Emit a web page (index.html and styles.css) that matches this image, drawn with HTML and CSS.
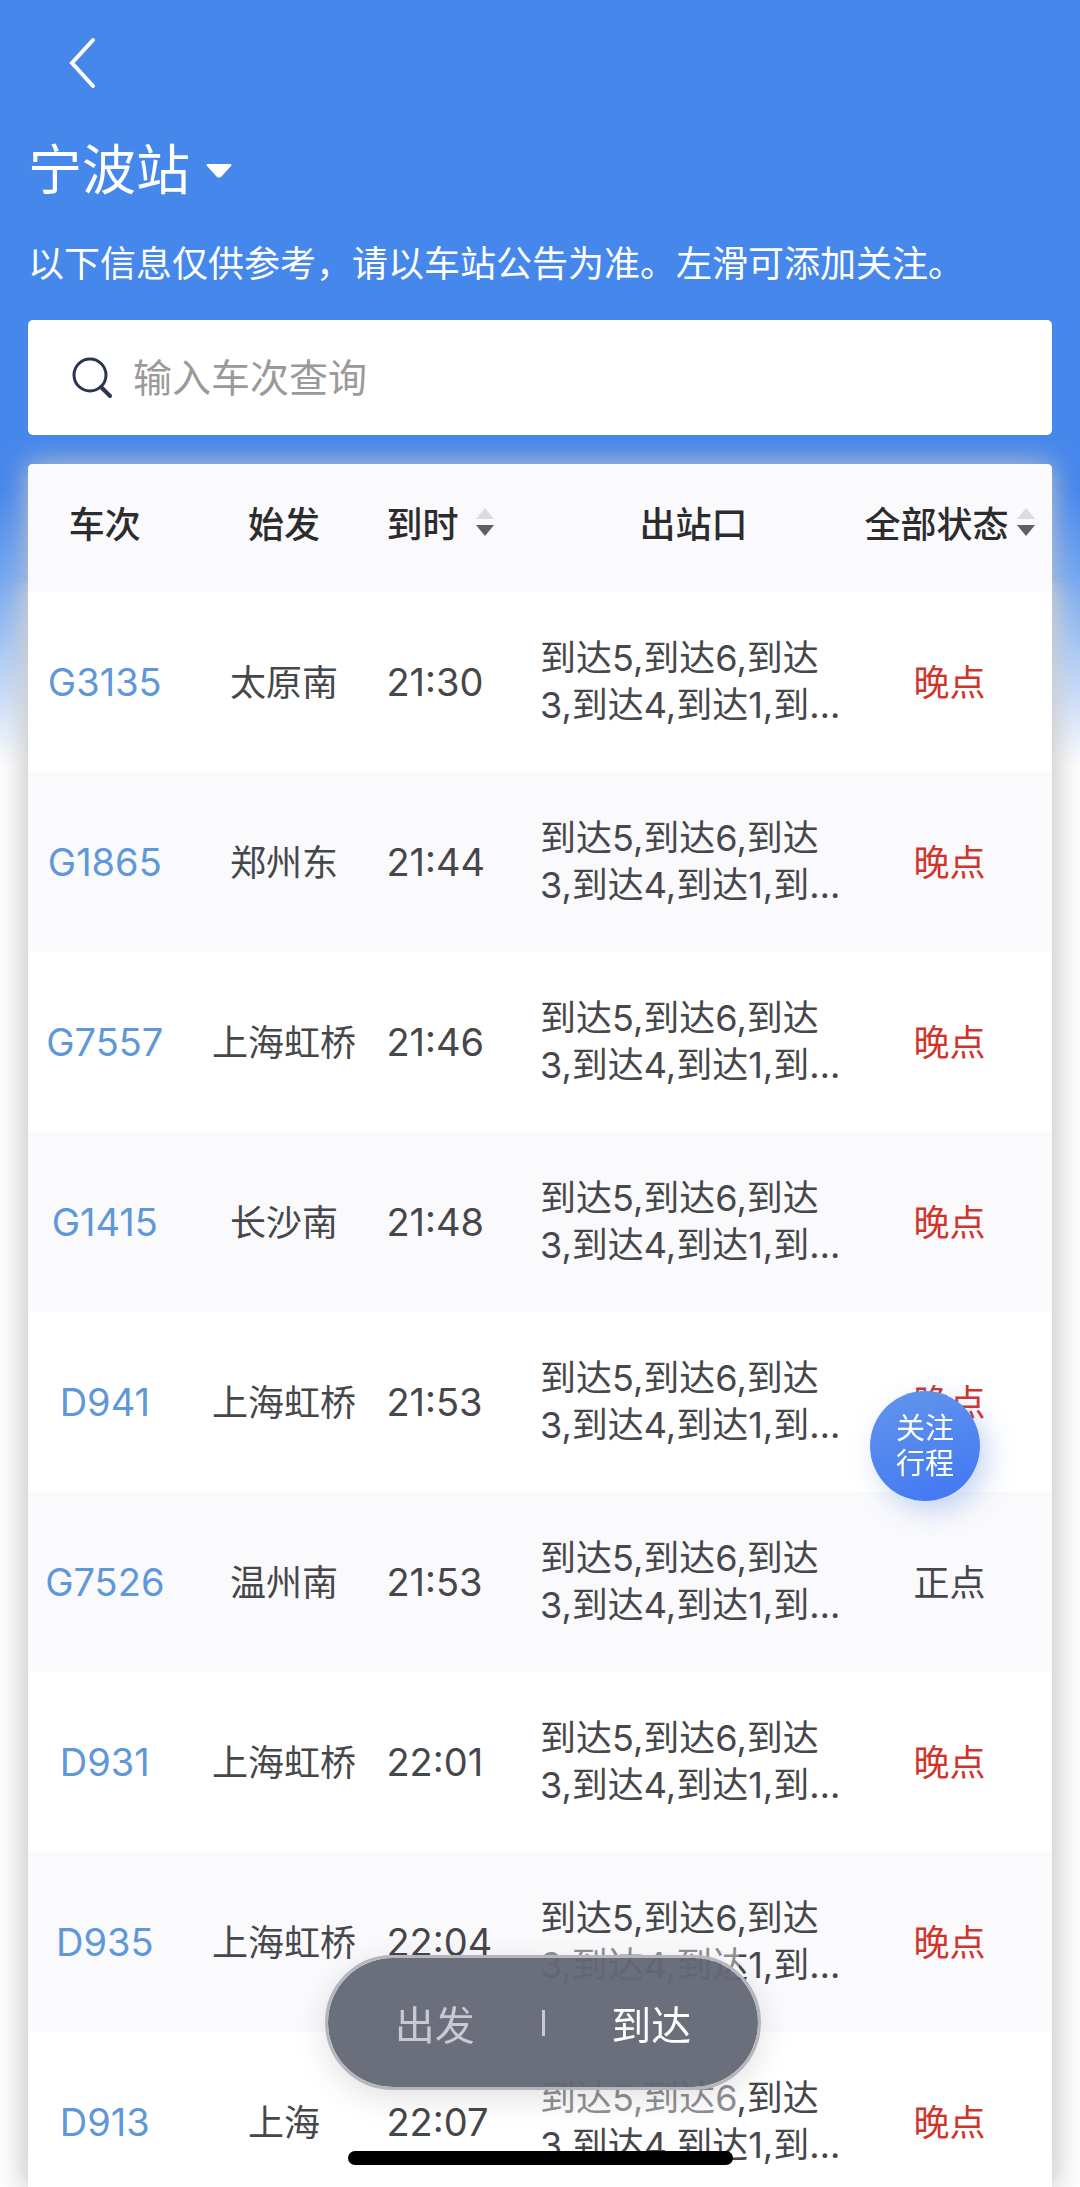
FILE: index.html
```html
<!DOCTYPE html>
<html lang="zh-CN">

<head>
  <meta charset="UTF-8">
  <meta name="viewport" content="width=device-width, initial-scale=1.0">
  <title>宁波站</title>
  <link rel="stylesheet" href="styles.css">
</head>

<body>
  <header class="top">
    <a class="back" href="#" aria-label="返回">
      <svg width="32" height="56" viewBox="0 0 32 56" fill="none" stroke="#fff" stroke-width="4" stroke-linecap="round" stroke-linejoin="miter">
        <path d="M28 6 L7 29 L28 52" />
      </svg>
    </a>
    <div class="station">
      <select class="station-select" aria-label="车站">
        <option>宁波站</option>
      </select>
      <svg width="26" height="14" viewBox="0 0 26 14" fill="#fff"><path d="M1 0 H25 Q26 1 25 2 L15 13 Q13 14 11 13 L1 2 Q0 1 1 0 Z" /></svg>
    </div>
    <p class="notice">以下信息仅供参考，请以车站公告为准。左滑可添加关注。</p>
    <label class="search">
      <svg width="42" height="42" viewBox="0 0 42 42" fill="none" stroke="#2c3550" stroke-width="3" stroke-linecap="round">
        <circle cx="19" cy="18" r="16" />
        <path d="M30 30 L39 39" stroke-width="4" />
      </svg>
      <input class="search-input" type="text" placeholder="输入车次查询" aria-label="输入车次查询">
    </label>
  </header>

  <main class="board">
    <table class="trains">
      <colgroup>
        <col class="col-no">
        <col class="col-from">
        <col class="col-time">
        <col class="col-exit">
        <col class="col-status">
      </colgroup>
      <thead>
        <tr>
          <th>车次</th>
          <th>始发</th>
          <th class="time">
            <button class="sort sort-time">到时
              <svg width="18" height="28" viewBox="0 0 18 28"><path d="M9 0 L18 11 H0 Z" fill="#dcdcde" /><path d="M9 28 L0 17 H18 Z" fill="#606064" /></svg>
            </button>
          </th>
          <th>出站口</th>
          <th>
            <button class="sort">全部状态
              <svg width="18" height="28" viewBox="0 0 18 28"><path d="M9 0 L18 11 H0 Z" fill="#dcdcde" /><path d="M9 28 L0 17 H18 Z" fill="#606064" /></svg>
            </button>
          </th>
        </tr>
      </thead>
      <tbody>
        <tr>
          <td class="no"><a href="#">G3135</a></td>
          <td>太原南</td>
          <td class="time">21:30</td>
          <td class="exit"><div class="clamp">到达5,到达6,到达3,到达4,到达1,到达2</div></td>
          <td class="late">晚点</td>
        </tr>
        <tr>
          <td class="no"><a href="#">G1865</a></td>
          <td>郑州东</td>
          <td class="time">21:44</td>
          <td class="exit"><div class="clamp">到达5,到达6,到达3,到达4,到达1,到达2</div></td>
          <td class="late">晚点</td>
        </tr>
        <tr>
          <td class="no"><a href="#">G7557</a></td>
          <td>上海虹桥</td>
          <td class="time">21:46</td>
          <td class="exit"><div class="clamp">到达5,到达6,到达3,到达4,到达1,到达2</div></td>
          <td class="late">晚点</td>
        </tr>
        <tr>
          <td class="no"><a href="#">G1415</a></td>
          <td>长沙南</td>
          <td class="time">21:48</td>
          <td class="exit"><div class="clamp">到达5,到达6,到达3,到达4,到达1,到达2</div></td>
          <td class="late">晚点</td>
        </tr>
        <tr>
          <td class="no"><a href="#">D941</a></td>
          <td>上海虹桥</td>
          <td class="time">21:53</td>
          <td class="exit"><div class="clamp">到达5,到达6,到达3,到达4,到达1,到达2</div></td>
          <td class="late">晚点</td>
        </tr>
        <tr>
          <td class="no"><a href="#">G7526</a></td>
          <td>温州南</td>
          <td class="time">21:53</td>
          <td class="exit"><div class="clamp">到达5,到达6,到达3,到达4,到达1,到达2</div></td>
          <td>正点</td>
        </tr>
        <tr>
          <td class="no"><a href="#">D931</a></td>
          <td>上海虹桥</td>
          <td class="time">22:01</td>
          <td class="exit"><div class="clamp">到达5,到达6,到达3,到达4,到达1,到达2</div></td>
          <td class="late">晚点</td>
        </tr>
        <tr>
          <td class="no"><a href="#">D935</a></td>
          <td>上海虹桥</td>
          <td class="time">22:04</td>
          <td class="exit"><div class="clamp">到达5,到达6,到达3,到达4,到达1,到达2</div></td>
          <td class="late">晚点</td>
        </tr>
        <tr>
          <td class="no"><a href="#">D913</a></td>
          <td>上海</td>
          <td class="time">22:07</td>
          <td class="exit"><div class="clamp">到达5,到达6,到达3,到达4,到达1,到达2</div></td>
          <td class="late">晚点</td>
        </tr>
      </tbody>
    </table>
  </main>

  <button class="follow">关注<br>行程</button>

  <div class="dock">
    <div class="switch">
      <button class="switch-item">出发</button>
      <span class="switch-line"></span>
      <button class="switch-item active">到达</button>
    </div>
  </div>

  <div class="home-bar"></div>
</body>

</html>
```

FILE: styles.css
```css
* {
  box-sizing: border-box;
}

body {
  display: flex;
  flex-direction: column;
  height: 100vh;
  margin: 0;
  padding: 0 28px;
  overflow: hidden;
  background: linear-gradient(#4687ec 0, #4687ec 490px, #78a9f1 583px, #fdfdfd 765px);
  color: #46474b;
  font-family: Inter, "Noto Sans CJK SC", sans-serif;
  font-size: 36px;
}

button,
select,
input {
  padding: 0;
  border: none;
  background: none;
  color: inherit;
  font: inherit;
}

svg {
  display: block;
  flex: none;
}

.top {
  flex: none;
  padding-top: 32px;
  color: #fff;
}

.back {
  display: flex;
  align-items: center;
  width: 80px;
  height: 60px;
  padding-left: 37px;
}

.station {
  display: flex;
  align-items: center;
  gap: 16px;
  height: 64px;
  margin-top: 47px;
}

.station-select {
  appearance: none;
  height: 64px;
  font-size: 54px;
  line-height: 64px;
}

.notice {
  margin: 37px 0 32px;
  line-height: 48px;
}

.search {
  display: flex;
  align-items: center;
  gap: 20px;
  height: 115px;
  padding: 0 43px;
  border-radius: 5px;
  background: #fff;
}

.search-input {
  flex: 1;
  min-width: 0;
  height: 60px;
  outline: none;
  color: #46474b;
  font-size: 39px;
}

.search-input::placeholder {
  color: #9a9a9a;
  opacity: 1;
}

.board {
  position: relative;
  flex: 1;
  min-height: 0;
  margin-top: 29px;
  border-radius: 5px 5px 0 0;
  background: #fff;
  box-shadow: 0 0 28px #c8c8c8;
}

/* second shadow, beside the rows only */
.board::before {
  content: "";
  position: absolute;
  z-index: -1;
  inset: 119px 0 0;
  box-shadow: 0 0 28px rgba(220, 220, 220, 0.9);
  clip-path: inset(0 -28px);
}

.trains {
  width: 100%;
  table-layout: fixed;
  border-spacing: 0;
  text-align: center;
}

.col-no,
.col-time {
  width: 15%;
}

.col-from,
.col-status {
  width: 20%;
}

.col-exit {
  width: 30%;
}

th {
  height: 128px;
  padding: 0 0 12px;
  background: #fafafc;
  color: #2c2c2e;
  font-weight: 500;
}

th:first-child {
  border-top-left-radius: 5px;
}

th:last-child {
  border-top-right-radius: 5px;
}

td {
  height: 180px;
  padding: 0 0 4px;
  white-space: nowrap;
}

tbody tr:nth-child(even) {
  background: #fafafc;
}

td a {
  color: #5f98d8;
  text-decoration: none;
}

.time {
  text-align: left;
}

td.no,
td.time {
  padding-bottom: 0;
  font-size: 38px;
}

.sort {
  display: inline-flex;
  align-items: center;
  gap: 8px;
  white-space: nowrap;
}

.sort-time {
  gap: 18px;
}

td.exit {
  padding-bottom: 0;
  text-align: left;
  white-space: normal;
}

.clamp {
  display: -webkit-box;
  overflow: hidden;
  line-height: 47px;
  -webkit-box-orient: vertical;
  -webkit-line-clamp: 2;
}

.late {
  color: #d0352c;
}

.follow {
  position: fixed;
  right: 100px;
  bottom: 686px;
  width: 110px;
  height: 110px;
  border-radius: 50%;
  background: linear-gradient(160deg, #6496ea, #3f76f4);
  box-shadow: 8px 10px 28px rgba(70, 120, 220, 0.3);
  color: #fff;
  font-size: 29px;
  line-height: 35px;
}

.dock {
  position: fixed;
  bottom: 97px;
  left: 50%;
  width: 436px;
  margin-left: -215px;
}

/* light veil behind the active tab */
.dock::before {
  content: "";
  position: absolute;
  inset: -8px 22px -34px 212px;
  background: rgba(255, 255, 255, 0.4);
}

.switch {
  position: relative;
  display: flex;
  align-items: center;
  height: 135px;
  border: 3px solid #b4b5bd;
  border-radius: 68px;
  background: rgba(96, 99, 113, 0.93);
  background-clip: padding-box;
  box-shadow: 0 8px 32px rgba(0, 0, 0, 0.12);
}

.switch-item {
  flex: 1;
  color: #c9cad1;
  font-size: 40px;
}

.switch-item.active {
  color: #fff;
}

.switch-line {
  width: 3px;
  height: 26px;
  background: #c9cad1;
}

.home-bar {
  position: fixed;
  bottom: 22px;
  left: 50%;
  width: 385px;
  height: 14px;
  margin-left: -192px;
  border-radius: 7px;
  background: #000;
}
```
